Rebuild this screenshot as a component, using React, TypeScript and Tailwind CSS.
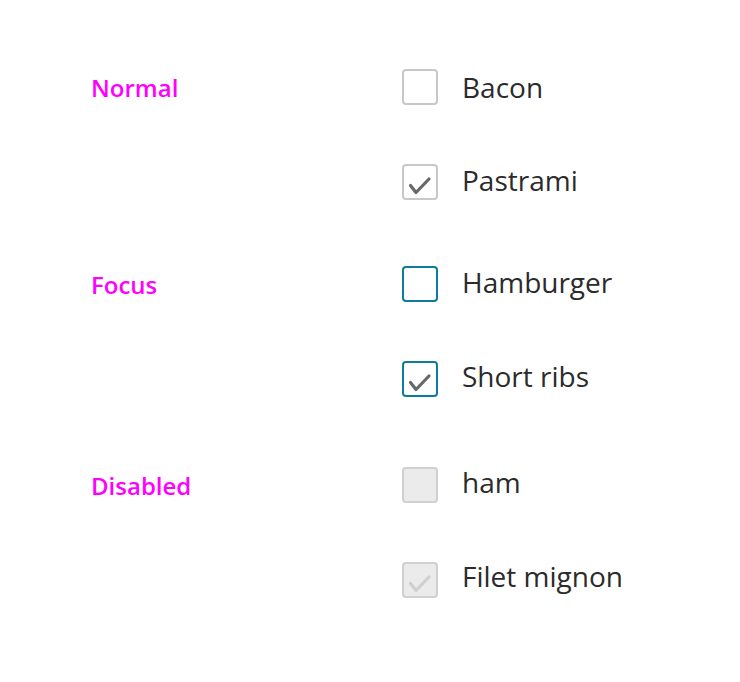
import React from "react";

type Item = { label: string; checked: boolean; nudge: string };
type Section = { title: string; state: "normal" | "focus" | "disabled"; items: Item[]; top: string };

const sections: Section[] = [
  {
    title: "Normal",
    state: "normal",
    top: "pt-[69px]",
    items: [
      { label: "Bacon", checked: false, nudge: "top-0" },
      { label: "Pastrami", checked: true, nudge: "-top-[2px]" },
    ],
  },
  {
    title: "Focus",
    state: "focus",
    top: "pt-[66px]",
    items: [
      { label: "Hamburger", checked: false, nudge: "-top-[2px]" },
      { label: "Short ribs", checked: true, nudge: "-top-[3px]" },
    ],
  },
  {
    title: "Disabled",
    state: "disabled",
    top: "pt-[70px]",
    items: [
      { label: "ham", checked: false, nudge: "-top-[3px]" },
      { label: "Filet mignon", checked: true, nudge: "-top-[4px]" },
    ],
  },
];

const Box = ({ state, checked }: { state: Section["state"]; checked: boolean }) => {
  const box =
    state === "focus"
      ? "border-[#0e7c9b] bg-white"
      : state === "disabled"
      ? "border-[#d0d0d0] bg-[#ebebeb]"
      : "border-[#c8c8c8] bg-white";
  const tick = state === "disabled" ? "#cfcfcf" : "#686868";
  return (
    <span className={`flex h-[36px] w-[36px] shrink-0 items-center justify-center rounded-[4px] border-2 ${box}`}>
      {checked && (
        <svg width="32" height="32" viewBox="0 0 32 32" fill="none">
          <path d="M6.5 19.5 L12 26.5 L25 13" stroke={tick} strokeWidth="3.2" strokeLinecap="round" strokeLinejoin="round" />
        </svg>
      )}
    </span>
  );
};

export default function App() {
  return (
    <div className="min-h-screen bg-white pl-[91px] font-['Open_Sans',sans-serif]">
      {sections.map((s) => (
        <div key={s.title} className={`grid grid-cols-[311px_1fr] ${s.top}`}>
          <div className="flex h-[36px] items-center pt-[1px] text-[24px] font-semibold text-[#ff00ff]">
            {s.title}
          </div>
          <div className="flex flex-col gap-[59px]">
            {s.items.map((it) => (
              <label key={it.label} className="flex h-[36px] items-center gap-[24px]">
                <Box state={s.state} checked={it.checked} />
                <span className={`relative ${it.nudge} text-[28px] leading-none text-[#2b2b2b]`}>{it.label}</span>
              </label>
            ))}
          </div>
        </div>
      ))}
    </div>
  );
}
